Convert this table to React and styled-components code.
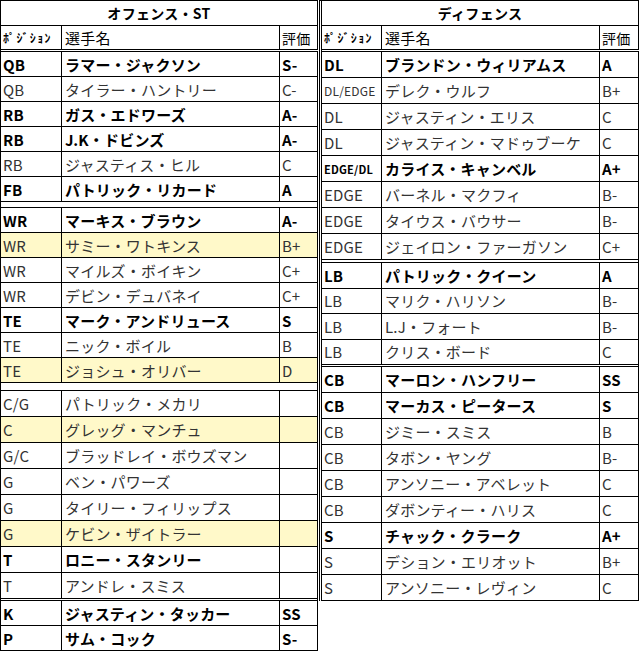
import React from "react"
import styled, { createGlobalStyle } from "styled-components"

const GlobalStyle = createGlobalStyle`
  html, body {
    margin: 0;
    padding: 0;
    background: #fff;
  }
  body {
    font-family: "Noto Sans CJK JP", "Noto Sans", sans-serif;
    color: #000;
  }
  * {
    box-sizing: border-box;
  }
`

const offense = [
  {
    h: 25,
    gap: 6,
    rows: [
      ["QB", "ラマー・ジャクソン", "S-", true],
      ["QB", "タイラー・ハントリー", "C-"],
      ["RB", "ガス・エドワーズ", "A-", true],
      ["RB", "J.K・ドビンズ", "A-", true],
      ["RB", "ジャスティス・ヒル", "C"],
      ["FB", "パトリック・リカード", "A", true],
    ],
  },
  {
    h: 25,
    gap: 8,
    rows: [
      ["WR", "マーキス・ブラウン", "A-", true],
      ["WR", "サミー・ワトキンス", "B+", false, true],
      ["WR", "マイルズ・ボイキン", "C+"],
      ["WR", "デビン・デュバネイ", "C+"],
      ["TE", "マーク・アンドリュース", "S", true],
      ["TE", "ニック・ボイル", "B"],
      ["TE", "ジョシュ・オリバー", "D", false, true],
    ],
  },
  {
    h: 26,
    gap: 2,
    rows: [
      ["C/G", "パトリック・メカリ", ""],
      ["C", "グレッグ・マンチュ", "", false, true],
      ["G/C", "ブラッドレイ・ボウズマン", ""],
      ["G", "ベン・パワーズ", ""],
      ["G", "タイリー・フィリップス", ""],
      ["G", "ケビン・ザイトラー", "", false, true],
      ["T", "ロニー・スタンリー", "", true],
      ["T", "アンドレ・スミス", ""],
    ],
  },
  {
    h: 25,
    gap: 0,
    rows: [
      ["K", "ジャスティン・タッカー", "SS", true],
      ["P", "サム・コック", "S-", true],
    ],
  },
]

const defense = [
  {
    h: 26,
    gap: 3,
    rows: [
      ["DL", "ブランドン・ウィリアムス", "A", true],
      ["DL/EDGE", "デレク・ウルフ", "B+"],
      ["DL", "ジャスティン・エリス", "C"],
      ["DL", "ジャスティン・マドゥブーケ", "C"],
      ["EDGE/DL", "カライス・キャンベル", "A+", true],
      ["EDGE", "バーネル・マクフィ", "B-"],
      ["EDGE", "タイウス・バウサー", "B-"],
      ["EDGE", "ジェイロン・ファーガソン", "C+"],
    ],
  },
  {
    h: 25.5,
    gap: 2,
    rows: [
      ["LB", "パトリック・クイーン", "A", true],
      ["LB", "マリク・ハリソン", "B-"],
      ["LB", "L.J・フォート", "B-"],
      ["LB", "クリス・ボード", "C"],
    ],
  },
  {
    h: 26,
    gap: 0,
    rows: [
      ["CB", "マーロン・ハンフリー", "SS", true],
      ["CB", "マーカス・ピータース", "S", true],
      ["CB", "ジミー・スミス", "B"],
      ["CB", "タボン・ヤング", "B-"],
      ["CB", "アンソニー・アベレット", "C"],
      ["CB", "ダボンティー・ハリス", "C"],
      ["S", "チャック・クラーク", "A+", true],
      ["S", "デション・エリオット", "B+"],
      ["S", "アンソニー・レヴィン", "C"],
    ],
  },
]

const Page = styled.div`
  display: flex;
  align-items: flex-start;
  gap: 1px;
  width: 640px;
`

const Sheet = styled.div`
  width: ${p => p.$w}px;
  border-top: 1px solid #000;
  border-left: ${p => (p.$double ? "3px double #000" : "1px solid #000")};
`

const Title = styled.div`
  height: 25px;
  display: flex;
  align-items: center;
  justify-content: center;
  border-right: 1px solid #000;
  border-bottom: 1px solid #000;
  font-size: 14px;
  font-weight: 700;
  letter-spacing: 0.3px;
`

const Row = styled.div`
  display: grid;
  grid-template-columns: ${p => p.$cols};
  height: ${p => p.$h}px;
  border-bottom: ${p => (p.$double ? "3px double #000" : "1px solid #000")};
  background: ${p => (p.$hl ? "#fff9c9" : "transparent")};
`

const Cell = styled.div`
  display: flex;
  align-items: center;
  padding-left: ${p => p.$pad || 2}px;
  border-right: 1px solid #000;
  overflow: hidden;
  white-space: nowrap;
  font-size: ${p => p.$size || 15}px;
  font-weight: ${p => (p.$bold ? 700 : 400)};
  color: ${p => (p.$bold || p.$head ? "#000" : "#333")};
  letter-spacing: ${p => (p.$wide ? "1.4px" : "0.2px")};
`

const Spacer = styled.div`
  height: ${p => p.$h}px;
  border-right: 1px solid #000;
  border-bottom: 1px solid #000;
`

const posSize = pos => {
  if (pos === "DL/EDGE") return 12
  if (pos === "EDGE/DL") return 11
  return 15
}

const Table = ({ title, groups, cols, width, double }) => (
  <Sheet $w={width} $double={double}>
    <Title>{title}</Title>
    <Row $cols={cols} $h={26} $double>
      <Cell $size={12} $wide $bold>ﾎﾟｼﾞｼｮﾝ</Cell>
      <Cell $pad={3} $head>選手名</Cell>
      <Cell $size={14} $head>評価</Cell>
    </Row>
    {groups.map((g, gi) => (
      <React.Fragment key={gi}>
        {g.rows.map(([pos, name, grade, bold, hl], ri) => (
          <Row key={ri} $cols={cols} $h={g.h} $hl={hl}>
            <Cell $bold={bold} $size={posSize(pos)}>
              {pos}
            </Cell>
            <Cell $bold={bold} $pad={3}>
              {name}
            </Cell>
            <Cell $bold={bold}>{grade}</Cell>
          </Row>
        ))}
        {g.gap > 0 && <Spacer $h={g.gap} />}
      </React.Fragment>
    ))}
  </Sheet>
)

const App = () => (
  <>
    <GlobalStyle />
    <Page>
      <Table
        title="オフェンス・ST"
        groups={offense}
        cols="61px 218px 38px"
        width={318}
      />
      <Table
        title="ディフェンス"
        groups={defense}
        cols="60px 218px 39px"
        width={320}
        double
      />
    </Page>
  </>
)

export default App
